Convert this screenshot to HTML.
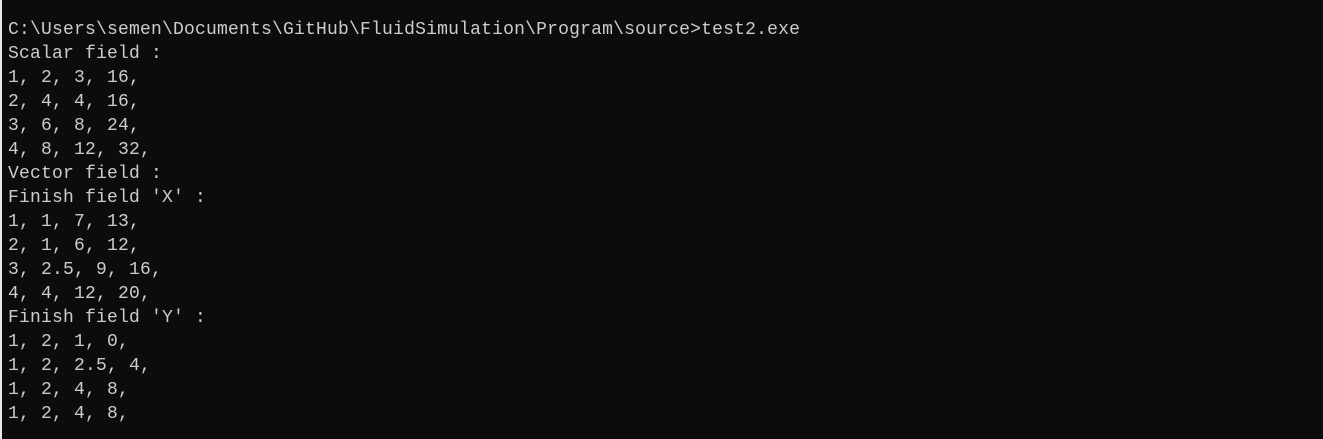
<!DOCTYPE html>
<html><head><style>
html,body{margin:0;padding:0;}
body{width:1323px;height:439px;background:#0c0c0c;overflow:hidden;position:relative;}
.strip{position:absolute;left:0;top:0;width:2px;height:439px;background:#e8e8e8;}
pre{position:absolute;left:8px;top:18px;margin:0;font-family:"Liberation Mono",monospace;font-size:18px;letter-spacing:0.2px;line-height:24px;color:#cccccc;}
</style></head><body>
<div class="strip"></div>
<pre>C:\Users\semen\Documents\GitHub\FluidSimulation\Program\source&gt;test2.exe
Scalar field :
1, 2, 3, 16,
2, 4, 4, 16,
3, 6, 8, 24,
4, 8, 12, 32,
Vector field :
Finish field 'X' :
1, 1, 7, 13,
2, 1, 6, 12,
3, 2.5, 9, 16,
4, 4, 12, 20,
Finish field 'Y' :
1, 2, 1, 0,
1, 2, 2.5, 4,
1, 2, 4, 8,
1, 2, 4, 8,</pre>
</body></html>
